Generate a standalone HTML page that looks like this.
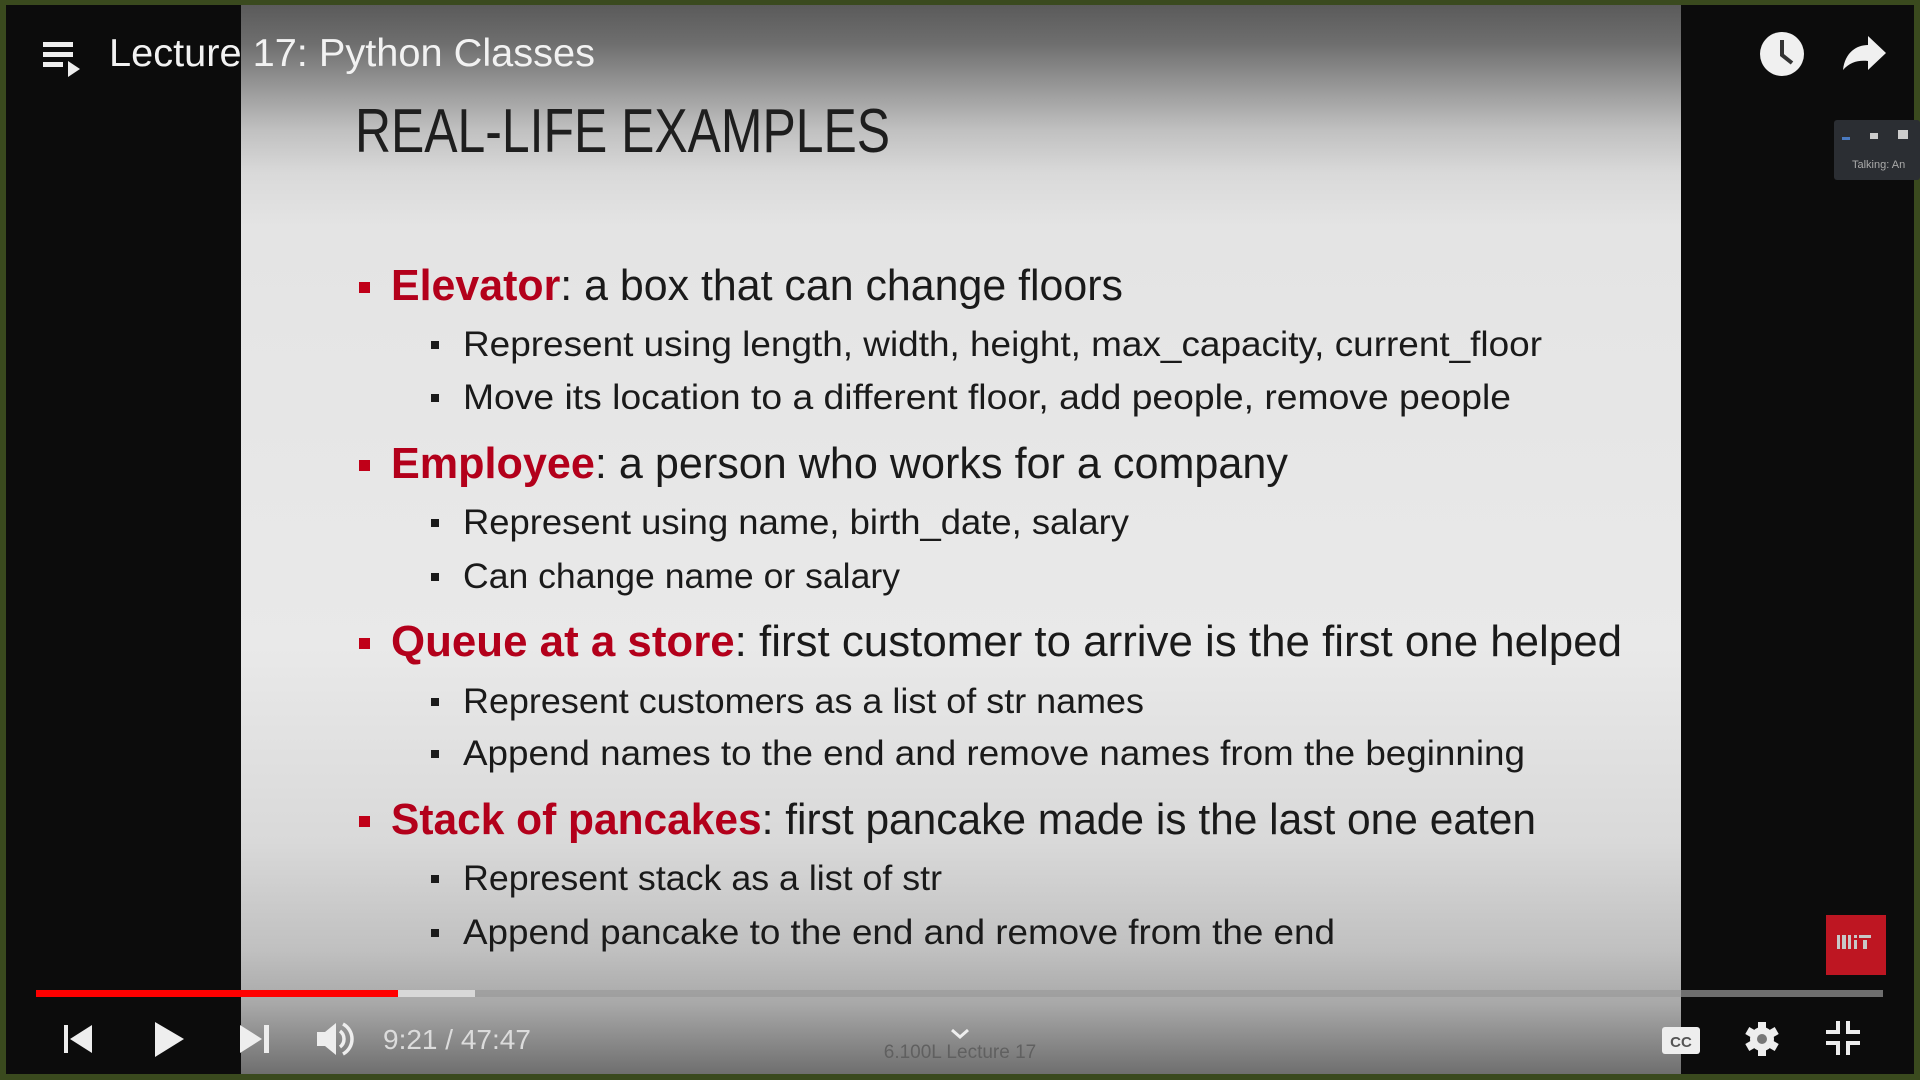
<!DOCTYPE html>
<html><head><meta charset="utf-8"><style>
html,body{margin:0;padding:0;width:1920px;height:1080px;overflow:hidden;background:#3a4a1e}
#frame{position:absolute;left:6px;top:5px;width:1908px;height:1069px;background:#0c0c0c;overflow:hidden}
svg{position:absolute;left:0;top:0}
</style></head><body>
<div id="frame"></div>
<svg width="1920" height="1080" viewBox="0 0 1920 1080" xmlns="http://www.w3.org/2000/svg">
<defs>
<linearGradient id="sg" x1="0" y1="0" x2="0" y2="1080" gradientUnits="userSpaceOnUse">
<stop offset="0" stop-color="#585858"/>
<stop offset="0.04" stop-color="#6e6e6e"/>
<stop offset="0.08" stop-color="#979797"/>
<stop offset="0.12" stop-color="#c0c0c0"/>
<stop offset="0.16" stop-color="#d9d9d9"/>
<stop offset="0.21" stop-color="#e4e4e4"/>
<stop offset="0.6" stop-color="#e9e9e9"/>
<stop offset="0.78" stop-color="#d9d9d9"/>
<stop offset="0.88" stop-color="#c0c0c0"/>
<stop offset="0.93" stop-color="#a8a8a8"/>
<stop offset="1" stop-color="#6a6a6a"/>
</linearGradient>
</defs>
<rect x="241" y="5" width="1440" height="1069" fill="url(#sg)"/>
<g font-family="Liberation Sans, sans-serif" fill="#1a1a1a">
<text x="355" y="152" font-size="62" textLength="535" lengthAdjust="spacingAndGlyphs" fill="#1e1e1e">REAL-LIFE EXAMPLES</text>
<g font-size="44">
<rect x="359" y="282" width="11" height="11" fill="#c00018"/>
<text x="391" y="300" textLength="732" lengthAdjust="spacingAndGlyphs"><tspan fill="#b3001b" font-weight="bold">Elevator</tspan>: a box that can change floors</text>
<rect x="359" y="460" width="11" height="11" fill="#c00018"/>
<text x="391" y="478" textLength="897" lengthAdjust="spacingAndGlyphs"><tspan fill="#b3001b" font-weight="bold">Employee</tspan>: a person who works for a company</text>
<rect x="359" y="638" width="11" height="11" fill="#c00018"/>
<text x="391" y="656" textLength="1231" lengthAdjust="spacingAndGlyphs"><tspan fill="#b3001b" font-weight="bold">Queue at a store</tspan>: first customer to arrive is the first one helped</text>
<rect x="359" y="816" width="11" height="11" fill="#c00018"/>
<text x="391" y="834" textLength="1145" lengthAdjust="spacingAndGlyphs"><tspan fill="#b3001b" font-weight="bold">Stack of pancakes</tspan>: first pancake made is the last one eaten</text>
</g>
<g font-size="35">
<rect x="431" y="341" width="8" height="8"/><text x="463" y="356" textLength="1079" lengthAdjust="spacingAndGlyphs">Represent using length, width, height, max_capacity, current_floor</text>
<rect x="431" y="394" width="8" height="8"/><text x="463" y="409" textLength="1048" lengthAdjust="spacingAndGlyphs">Move its location to a different floor, add people, remove people</text>
<rect x="431" y="519" width="8" height="8"/><text x="463" y="534" textLength="666" lengthAdjust="spacingAndGlyphs">Represent using name, birth_date, salary</text>
<rect x="431" y="573" width="8" height="8"/><text x="463" y="588" textLength="437" lengthAdjust="spacingAndGlyphs">Can change name or salary</text>
<rect x="431" y="698" width="8" height="8"/><text x="463" y="713" textLength="681" lengthAdjust="spacingAndGlyphs">Represent customers as a list of str names</text>
<rect x="431" y="750" width="8" height="8"/><text x="463" y="765" textLength="1062" lengthAdjust="spacingAndGlyphs">Append names to the end and remove names from the beginning</text>
<rect x="431" y="875" width="8" height="8"/><text x="463" y="890" textLength="479" lengthAdjust="spacingAndGlyphs">Represent stack as a list of str</text>
<rect x="431" y="929" width="8" height="8"/><text x="463" y="944" textLength="872" lengthAdjust="spacingAndGlyphs">Append pancake to the end and remove from the end</text>
</g>
<text x="960" y="1058" font-size="19" text-anchor="middle" fill="#606060">6.100L Lecture 17</text>
</g>
<!-- zoom widget -->
<rect x="1834" y="120" width="86" height="60" rx="3" fill="#2b2e33"/>
<rect x="1842" y="137" width="8" height="3" fill="#4a7ac0"/><rect x="1870" y="133" width="8" height="6" fill="#ccc"/><rect x="1898" y="130" width="10" height="9" fill="#ccc"/>
<text x="1852" y="168" font-family="Liberation Sans, sans-serif" font-size="11" fill="#aaa">Talking: An</text>
<!-- header -->
<g fill="#eee">
<rect x="43" y="42" width="30" height="5"/><rect x="43" y="52" width="30" height="5"/><rect x="43" y="62" width="20" height="5"/>
<path d="M68 61 L80 69 L68 77 Z"/>
</g>
<text x="109" y="66" font-family="Liberation Sans, sans-serif" font-size="39" fill="#f2f2f2" textLength="486" lengthAdjust="spacingAndGlyphs">Lecture 17: Python Classes</text>
<circle cx="1782" cy="54" r="22" fill="#f0f0f0"/>
<path d="M1782 40 V55 L1792 63" stroke="#333" stroke-width="4" fill="none"/>
<path d="M1843 70 C1845 52 1857 45 1868 45 V36 L1886 53 L1868 70 V61 C1858 60 1850 62 1843 70 Z" fill="#f0f0f0"/>
<!-- MIT logo -->
<rect x="1826" y="915" width="60" height="60" fill="#be1622"/>
<g fill="#c8c8c8"><rect x="1837" y="935" width="3" height="14"/><rect x="1842" y="935" width="4" height="14"/><rect x="1848" y="935" width="3" height="14"/><rect x="1854" y="940" width="3" height="9"/><rect x="1854" y="935" width="3" height="3"/><rect x="1859" y="935" width="12" height="3"/><rect x="1863" y="940" width="4" height="9"/></g>
<!-- progress -->
<rect x="36" y="990" width="1847" height="7" fill="#9a9a9a" opacity="0.7"/>
<rect x="36" y="990" width="439" height="7" fill="#d8d8d8"/>
<rect x="36" y="990" width="362" height="7" fill="#ff0000"/>
<!-- controls -->
<g fill="#eee">
<rect x="64" y="1025" width="4" height="28"/><path d="M92 1025 V1053 L70 1039 Z"/>
<path d="M155 1022 L184 1039 L155 1057 Z"/>
<path d="M240 1025 V1053 L262 1039 Z"/><rect x="264" y="1025" width="5" height="28"/>
<path d="M317 1032 H325 L336 1023 V1055 L325 1046 H317 Z"/>
</g>
<path d="M340 1031 A10 10 0 0 1 340 1047" stroke="#eee" stroke-width="3.5" fill="none"/>
<path d="M343 1024 A17 17 0 0 1 343 1054" stroke="#eee" stroke-width="3.5" fill="none"/>
<text x="383" y="1049" font-family="Liberation Sans, sans-serif" font-size="28" fill="#dcdcdc">9:21 / 47:47</text>
<path d="M952 1030 L960 1037 L968 1030" stroke="#eee" stroke-width="3" fill="none"/>
<rect x="1662" y="1027" width="38" height="27" rx="3" fill="#eee"/>
<text x="1681" y="1047" font-family="Liberation Sans, sans-serif" font-weight="bold" font-size="15" fill="#555" text-anchor="middle">CC</text>
<g transform="translate(1762,1039)" fill="#eee">
<circle r="12"/>
<g><rect x="-4" y="-17" width="8" height="34"/><rect x="-4" y="-17" width="8" height="34" transform="rotate(60)"/><rect x="-4" y="-17" width="8" height="34" transform="rotate(120)"/></g>
<circle r="5" fill="#777"/>
</g>
<g fill="#eee">
<path d="M1826 1030 H1836 V1021 H1840 V1034 H1826 Z"/>
<path d="M1860 1030 H1850 V1021 H1846 V1034 H1860 Z"/>
<path d="M1826 1045 H1836 V1055 H1840 V1041 H1826 Z"/>
<path d="M1860 1045 H1850 V1055 H1846 V1041 H1860 Z"/>
</g>
</svg>
</body></html>
